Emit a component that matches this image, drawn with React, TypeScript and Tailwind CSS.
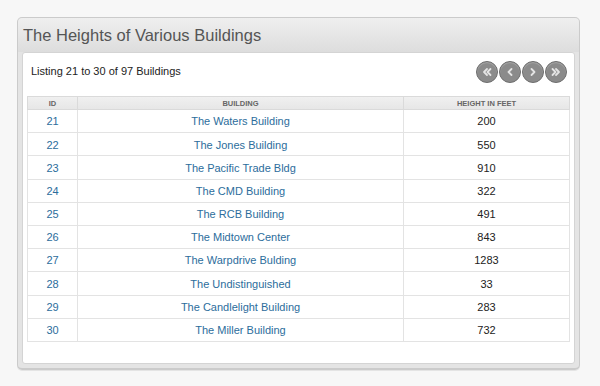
const rows = [
  { id: 21, name: "The Waters Building", height: 200 },
  { id: 22, name: "The Jones Building", height: 550 },
  { id: 23, name: "The Pacific Trade Bldg", height: 910 },
  { id: 24, name: "The CMD Building", height: 322 },
  { id: 25, name: "The RCB Building", height: 491 },
  { id: 26, name: "The Midtown Center", height: 843 },
  { id: 27, name: "The Warpdrive Bulding", height: 1283 },
  { id: 28, name: "The Undistinguished", height: 33 },
  { id: 29, name: "The Candlelight Building", height: 283 },
  { id: 30, name: "The Miller Building", height: 732 },
];

function PagerButton({ d }: { d: string }) {
  return (
    <button className="flex h-[22px] w-[22px] items-center justify-center rounded-full border border-[#6e6e6e] bg-[#8b8b8b] shadow-[inset_0_1px_1px_rgba(255,255,255,0.25)]">
      <svg width="12" height="12" viewBox="0 0 12 12" fill="none">
        <path d={d} stroke="#e4e4e4" strokeWidth="1.8" strokeLinecap="round" strokeLinejoin="round" />
      </svg>
    </button>
  );
}

export default function App() {
  return (
    <div className="h-[386px] w-[600px] bg-[#f7f7f7] pt-[17px] font-['Liberation_Sans',Arial,sans-serif]">
      <div className="ml-[17px] flex h-[353px] w-[563px] flex-col rounded-[5px] border border-b-2 border-[#cbcbcb] bg-[linear-gradient(#efefef,#dddddd_34px,#e4e4e4_34px)] shadow-[0_1px_0_#e4e4e4]">
        <div className="flex h-[34px] items-center pl-[5px] text-[16.5px] text-[#555]">
          The Heights of Various Buildings
        </div>
        <div className="mx-[4px] flex flex-1 flex-col rounded-[3px] border border-[#d4d4d4] bg-white px-[4px]">
          <div className="flex h-[43px] items-start justify-between">
            <div className="pl-[4px] pt-[10px] text-[11px] text-[#222]">Listing 21 to 30 of 97 Buildings</div>
            <div className="flex gap-[1px] pr-[3px] pt-[8px]">
              <PagerButton d="M6 3 3 6l3 3M9.5 3l-3 3 3 3" />
              <PagerButton d="M7.5 3 4.5 6l3 3" />
              <PagerButton d="M4.5 3l3 3-3 3" />
              <PagerButton d="M2.5 3l3 3-3 3M6 3l3 3-3 3" />
            </div>
          </div>
          <table className="w-[543px] border-collapse text-center text-[11px]">
            <thead>
              <tr className="h-[13px] bg-[linear-gradient(#f0f0f0,#e6e6e6)] text-[7.5px] font-bold text-[#666]">
                <th className="w-[50px] border border-[#dadada] p-0 leading-[11px]">ID</th>
                <th className="w-[326px] border border-[#dadada] p-0 leading-[11px]">BUILDING</th>
                <th className="border border-[#dadada] p-0 leading-[11px]">HEIGHT IN FEET</th>
              </tr>
            </thead>
            <tbody>
              {rows.map((r) => (
                <tr key={r.id} className="h-[23.2px]">
                  <td className="border border-[#e3e3e3] p-0 pt-[1px] text-[#2c6d9c]">{r.id}</td>
                  <td className="border border-[#e3e3e3] p-0 pt-[1px] text-[#2c6d9c]">{r.name}</td>
                  <td className="border border-[#e3e3e3] p-0 pt-[1px] text-[#222]">{r.height}</td>
                </tr>
              ))}
            </tbody>
          </table>
        </div>
        <div className="h-[4px]" />
      </div>
    </div>
  );
}
